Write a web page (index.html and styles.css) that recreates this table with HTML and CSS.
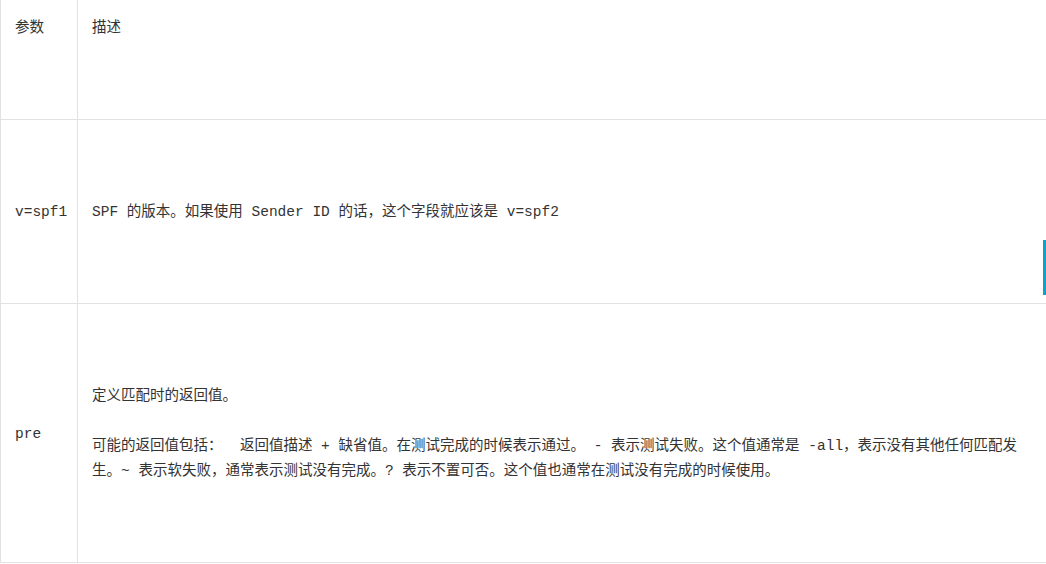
FILE: index.html
```html
<!DOCTYPE html>
<html lang="zh">
<head>
<meta charset="utf-8">
<title>SPF</title>
<link rel="stylesheet" href="styles.css">
</head>
<body>
<div class="page">
  <table class="spec">
    <tr class="head">
      <td class="param">参数</td>
      <td class="desc">描述</td>
    </tr>
    <tr>
      <td class="param">v=spf1</td>
      <td class="desc">SPF 的版本。如果使用 Sender ID 的话，这个字段就应该是 v=spf2</td>
    </tr>
    <tr>
      <td class="param">pre</td>
      <td class="desc">
        <p>定义匹配时的返回值。</p>
        <p>可能的返回值包括：&nbsp; 返回值描述 + 缺省值。在测试完成的时候表示通过。 - 表示测试失败。这个值通常是 -all，表示没有其他任何匹配发生。~ 表示软失败，通常表示测试没有完成。? 表示不置可否。这个值也通常在测试没有完成的时候使用。</p>
      </td>
    </tr>
  </table>
  <div class="thumb"></div>
</div>
</body>
</html>
```

FILE: styles.css
```css
html, body {
  margin: 0;
  padding: 0;
  background: #fff;
  overflow: hidden;
}
.page {
  position: relative;
  width: 1046px;
  height: 564px;
  overflow: hidden;
}
.spec {
  border-collapse: collapse;
  table-layout: fixed;
  width: 1052px;
  font-family: "Liberation Mono", "Noto Sans CJK SC", monospace;
  font-size: 14.5px;
  line-height: 25px;
  color: #333;
}
.spec td {
  border: 1px solid #e2e2e2;
  padding: 80px 14px 78px;
  vertical-align: middle;
  text-align: left;
}
.spec .head td {
  border-top: none;
  padding-top: 16px;
}
.spec .param {
  box-sizing: border-box;
  width: 77px;
}
.spec p {
  margin: 0;
}
.spec p + p {
  margin-top: 25px;
}
.thumb {
  position: absolute;
  left: 1043px;
  top: 240px;
  width: 3px;
  height: 55px;
  background: #0aa3c9;
}
```
